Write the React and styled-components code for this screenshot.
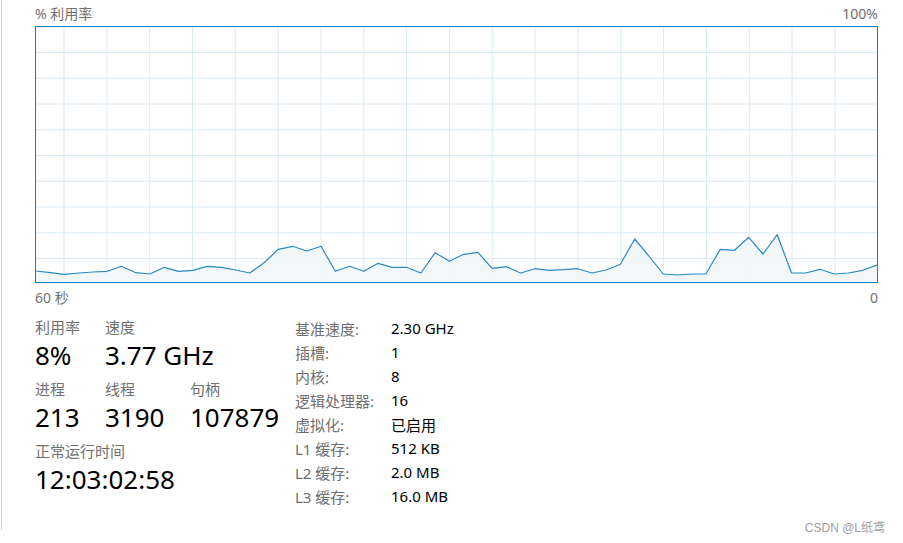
import React from 'react';
import styled, { createGlobalStyle } from 'styled-components';

const GlobalStyle = createGlobalStyle`
    html, body {
        margin: 0;
        padding: 0;
        background: #ffffff;
    }
    body {
        font-family: "Noto Sans", "Noto Sans CJK SC", sans-serif;
    }
`

const Page = styled.div`
    position: relative;
    width: 903px;
    height: 543px;
    overflow: hidden;
    background: #ffffff;
`
const Panel = styled.div`
    margin-left: 1px;
    height: 530px;
    border-left: 1px solid #d6d6d6;
    padding: 0 25px 0 33px;
    box-sizing: border-box;
`
const AxisRow = styled.div`
    display: flex;
    justify-content: space-between;
    align-items: center;
    height: ${p => p.$h}px;
    font-size: 14px;
    color: #707070;
`
const ChartBox = styled.div`
    height: 257px;
    border: 1px solid #117dbb;
    box-sizing: border-box;
    svg{
        display: block;
    }
`
const Details = styled.div`
    display: flex;
    margin-top: 6px;
`
const Stats = styled.div`
    width: 260px;
    display: flex;
    flex-direction: column;
    gap: 7px;
`
const StatRow = styled.div`
    display: flex;
`
const Stat = styled.div`
    width: ${p => p.$w ? p.$w + 'px' : 'auto'};
    display: flex;
    flex-direction: column;
    gap: 1px;
`
const StatLabel = styled.div`
    font-size: 15px;
    line-height: 20px;
    color: #707070;
`
const StatValue = styled.div`
    font-size: 26px;
    line-height: 34px;
    color: #000000;
    white-space: nowrap;
`
const Specs = styled.div`
    display: grid;
    grid-template-columns: 96px auto;
    grid-auto-rows: 24px;
    align-items: center;
    font-size: 15px;
    margin-top: -1px;
`
const SpecLabel = styled.div`
    color: #707070;
`
const SpecValue = styled.div`
    color: #000000;
`
const Watermark = styled.div`
    position: absolute;
    right: 18px;
    bottom: 8px;
    font-size: 12px;
    color: #a0a0a0;
    font-family: "Liberation Sans", "Noto Sans CJK SC", sans-serif;
`

const usage = [271, 272.7, 274.3, 273, 272, 271.3, 266.3, 272.7, 274, 267.3,
    271.3, 270.3, 266.3, 267.3, 270, 273, 262.7, 249.3, 246.3, 251,
    246.3, 271.3, 266.3, 271.3, 263.3, 267.3, 267.3, 273, 252.7, 261.3,
    254.3, 252.3, 268.3, 266.7, 273, 268.7, 270.3, 269.7, 268.7, 273,
    270, 264.3, 239, 256, 274, 275, 274, 274, 249.3, 250.3,
    237.3, 254, 234.7, 273, 273, 269.3, 274, 273, 270.3, 265]

const specs = [
    ['基准速度:', '2.30 GHz'],
    ['插槽:', '1'],
    ['内核:', '8'],
    ['逻辑处理器:', '16'],
    ['虚拟化:', '已启用'],
    ['L1 缓存:', '512 KB'],
    ['L2 缓存:', '2.0 MB'],
    ['L3 缓存:', '16.0 MB'],
]

const W = 841
const H = 255

function UsageChart(){
    const step = W / (usage.length - 1)
    const pts = usage.map((y, i) => `${(i * step).toFixed(1)},${(y - 27).toFixed(1)}`)
    const line = pts.join(' ')
    const area = `0,${H} ${line} ${W},${H}`
    const cols = []
    for (let k = 0; k < 19; k++) cols.push(28 + k * 42.83)
    const rows = []
    for (let k = 0; k < 9; k++) rows.push(25.5 + k * 25.75)
    return <svg width={W} height={H} viewBox={`0 0 ${W} ${H}`}>
        {cols.map(x => <line key={'c' + x} x1={x} x2={x} y1={0} y2={H} stroke="#d9eaf4" strokeWidth="1"/>)}
        {rows.map(y => <line key={'r' + y} x1={0} x2={W} y1={y} y2={y} stroke="#d9eaf4" strokeWidth="1"/>)}
        <polygon points={area} fill="#f1f6fa" fillOpacity="0.9"/>
        <polyline points={line} fill="none" stroke="#2a88c4" strokeWidth="1.2" strokeLinejoin="round"/>
    </svg>
}

export default function App(){
    return <Page>
        <GlobalStyle/>
        <Panel>
            <AxisRow $h={26}>
                <span>% 利用率</span>
                <span>100%</span>
            </AxisRow>
            <ChartBox>
                <UsageChart/>
            </ChartBox>
            <AxisRow $h={28}>
                <span>60 秒</span>
                <span>0</span>
            </AxisRow>
            <Details>
                <Stats>
                    <StatRow>
                        <Stat $w={70}>
                            <StatLabel>利用率</StatLabel>
                            <StatValue>8%</StatValue>
                        </Stat>
                        <Stat>
                            <StatLabel>速度</StatLabel>
                            <StatValue>3.77 GHz</StatValue>
                        </Stat>
                    </StatRow>
                    <StatRow>
                        <Stat $w={70}>
                            <StatLabel>进程</StatLabel>
                            <StatValue>213</StatValue>
                        </Stat>
                        <Stat $w={85}>
                            <StatLabel>线程</StatLabel>
                            <StatValue>3190</StatValue>
                        </Stat>
                        <Stat>
                            <StatLabel>句柄</StatLabel>
                            <StatValue>107879</StatValue>
                        </Stat>
                    </StatRow>
                    <StatRow>
                        <Stat>
                            <StatLabel>正常运行时间</StatLabel>
                            <StatValue>12:03:02:58</StatValue>
                        </Stat>
                    </StatRow>
                </Stats>
                <Specs>
                    {specs.map(([k, v]) => <React.Fragment key={k}>
                        <SpecLabel>{k}</SpecLabel>
                        <SpecValue>{v}</SpecValue>
                    </React.Fragment>)}
                </Specs>
            </Details>
        </Panel>
        <Watermark>CSDN @L纸鸢</Watermark>
    </Page>
}
